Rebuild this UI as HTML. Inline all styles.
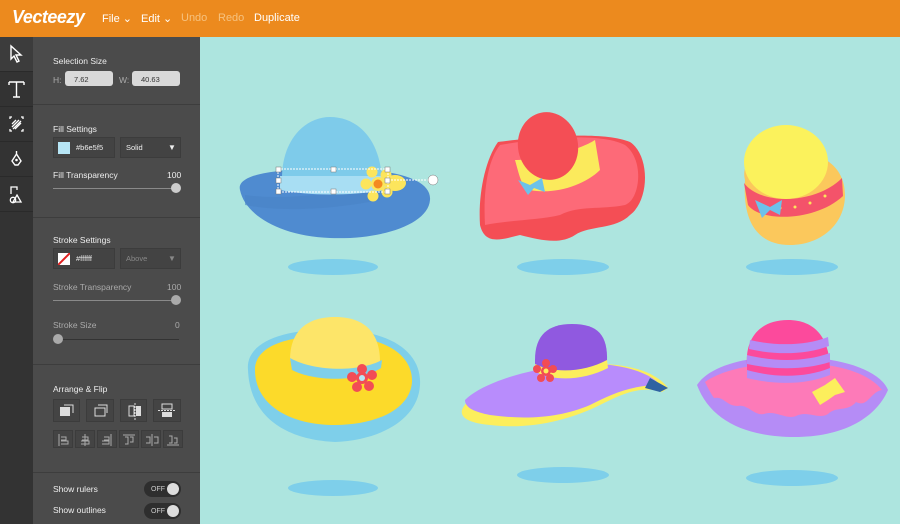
<!DOCTYPE html>
<html><head><style>
*{margin:0;padding:0;box-sizing:border-box}
body{width:900px;height:524px;overflow:hidden;font-family:"Liberation Sans",sans-serif;background:#ade5df;position:relative}
#top{position:absolute;left:0;top:0;width:900px;height:37px;background:#ec8a1e}
#top .logo{position:absolute;left:12px;top:7px;color:#fff;font:italic bold 18px "Liberation Sans",sans-serif;letter-spacing:-0.5px}
#top .m{position:absolute;top:12px;font-size:11px;color:#fff}
#tb{position:absolute;left:0;top:37px;width:33px;height:487px;background:#333}
#tb div{height:35px;border-bottom:1px solid #2a2a2a;position:relative}
#panel{position:absolute;left:33px;top:37px;width:167px;height:487px;background:#4b4b4b}
.t{position:absolute;font-size:8.5px;color:#eee}
.g{color:#aaa}
.sep{position:absolute;left:0;width:167px;height:1px;background:#3d3d3d}
.in{position:absolute;background:#d9d9d9;border-radius:3px;font-size:7.5px;color:#333;padding:4px 0 0 9px;height:15px}
.box{position:absolute;background:#434343;border:1px solid #3c3c3c}
.track{position:absolute;height:1px;background:#8a8a8a}
.knob{position:absolute;width:10px;height:10px;border-radius:50%;background:#ccc}
.btn{position:absolute;background:#444;border:1px solid #3c3c3c}
.tog{position:absolute;left:111px;width:37px;height:16px;border-radius:8px;background:#2e2e2e;font-size:7px;color:#ccc;padding:5px 0 0 7px;line-height:7px}
.tog i{position:absolute;right:2px;top:2px;width:12px;height:12px;border-radius:50%;background:#ddd}
</style></head><body>
<div id="top">
<div class="logo">Vecteezy</div>
<div class="m" style="left:102px">File ⌄</div>
<div class="m" style="left:141px">Edit ⌄</div>
<div class="m" style="left:181px;color:#f6c27f">Undo</div>
<div class="m" style="left:218px;color:#f6c27f">Redo</div>
<div class="m" style="left:254px">Duplicate</div>
</div>
<div id="tb">
<div style="background:#3c3c3c"><svg width="33" height="35"><path d="M11 9 L11 22 L14 19 L17 25 L19 24 L16 18 L21 18 Z" fill="none" stroke="#fff" stroke-width="1.4"/></svg></div>
<div><svg width="33" height="35"><path d="M9 10H24M9 10V13M24 10V13M16.5 10V25M13 25H20" stroke="#fff" stroke-width="1.4" fill="none"/></svg></div>
<div><svg width="33" height="35"><path d="M10 12V10H12M21 10H23V12M23 22V24H21M12 24H10V22M12 20L19 13M13 22L21 14M15 22L21 16M12 17L16 13" stroke="#fff" stroke-width="1.3" fill="none"/></svg></div>
<div><svg width="33" height="35"><path d="M16.5 9V13M12 19L16.5 12L21 19L18 23H15Z" stroke="#fff" stroke-width="1.4" fill="none"/><circle cx="16.5" cy="18" r="1.3" fill="#fff"/></svg></div>
<div><svg width="33" height="35"><path d="M11 17V10H17V13M17 18L21 25H13Z" stroke="#fff" stroke-width="1.3" fill="none"/><circle cx="13" cy="23" r="2.7" stroke="#fff" stroke-width="1.3" fill="none"/></svg></div>
</div>
<div id="panel">
<div class="t" style="left:20px;top:19px">Selection Size</div>
<div class="t g" style="left:20px;top:38px">H:</div><div class="in" style="left:32px;top:34px;width:48px">7.62</div>
<div class="t g" style="left:86px;top:38px">W:</div><div class="in" style="left:99px;top:34px;width:48px">40.63</div>
<div class="sep" style="top:67px"></div>
<div class="t" style="left:20px;top:87px">Fill Settings</div>
<div class="box" style="left:20px;top:100px;width:62px;height:21px"><div style="position:absolute;left:4px;top:4px;width:12px;height:12px;background:#b6e5f5"></div><span class="t" style="left:22px;top:5px;font-size:7.5px">#b6e5f5</span></div>
<div class="box" style="left:87px;top:100px;width:61px;height:21px"><span class="t" style="left:5px;top:5px;font-size:7.5px">Solid</span><span class="t" style="left:47px;top:5px;font-size:8px">▼</span></div>
<div class="t" style="left:20px;top:133px">Fill Transparency</div><div class="t" style="left:134px;top:133px">100</div>
<div class="track" style="left:20px;top:151px;width:122px"></div><div class="knob" style="left:138px;top:146px"></div>
<div class="sep" style="top:180px"></div>
<div class="t" style="left:20px;top:198px">Stroke Settings</div>
<div class="box" style="left:20px;top:211px;width:62px;height:21px"><svg style="position:absolute;left:4px;top:4px" width="12" height="12"><rect width="12" height="12" fill="#fff"/><path d="M0 12L12 0" stroke="#e02020" stroke-width="2"/></svg><span class="t" style="left:22px;top:5px;font-size:7.5px">#ffffff</span></div>
<div class="box" style="left:87px;top:211px;width:61px;height:21px"><span class="t g" style="left:5px;top:5px;font-size:7.5px;color:#888">Above</span><span class="t" style="left:47px;top:5px;font-size:8px;color:#888">▼</span></div>
<div class="t g" style="left:20px;top:245px">Stroke Transparency</div><div class="t g" style="left:134px;top:245px">100</div>
<div class="track" style="left:20px;top:263px;width:122px"></div><div class="knob" style="left:138px;top:258px;background:#aaa"></div>
<div class="t g" style="left:20px;top:283px">Stroke Size</div><div class="t g" style="left:142px;top:283px">0</div>
<div class="track" style="left:22px;top:302px;width:124px;background:#333"></div><div class="knob" style="left:20px;top:297px;background:#aaa"></div>
<div class="sep" style="top:327px"></div>
<div class="t" style="left:20px;top:347px">Arrange &amp; Flip</div>
<div class="btn" style="left:20px;top:362px;width:27px;height:23px"></div>
<div class="btn" style="left:53px;top:362px;width:28px;height:23px"></div>
<div class="btn" style="left:87px;top:362px;width:27px;height:23px"></div>
<div class="btn" style="left:120px;top:362px;width:28px;height:23px"></div>
<div class="btn" style="left:20px;top:393px;width:20px;height:18px"></div>
<div class="btn" style="left:42px;top:393px;width:20px;height:18px"></div>
<div class="btn" style="left:64px;top:393px;width:20px;height:18px"></div>
<div class="btn" style="left:86px;top:393px;width:20px;height:18px"></div>
<div class="btn" style="left:108px;top:393px;width:20px;height:18px"></div>
<div class="btn" style="left:130px;top:393px;width:20px;height:18px"></div>
<svg style="position:absolute;left:20px;top:362px" width="130" height="52"><rect x="7" y="8" width="10" height="9" fill="#ddd"/><path d="M11 6h9v8" stroke="#ddd" fill="none"/><rect x="42" y="9" width="10" height="8" stroke="#ddd" fill="none"/><path d="M45 6h9v8" stroke="#ddd" fill="none"/><rect x="76" y="7" width="5" height="10" stroke="#ddd" fill="none"/><rect x="83" y="7" width="5" height="10" fill="#ddd"/><path d="M82 4v17" stroke="#ddd" stroke-dasharray="2 1"/><rect x="109" y="5" width="10" height="5" stroke="#ddd" fill="none"/><rect x="109" y="13" width="10" height="5" fill="#ddd"/><path d="M105 11.5h18" stroke="#ddd" stroke-dasharray="2 1"/>
<g stroke="#aaa" fill="none"><path d="M6 35v12M8 38h5v3H8M8 42h7v3H8"/><path d="M32 35v12M29 38h6v3h-6M28 42h8v3h-8"/><path d="M58 35v12M51 38h5v3h-5M49 42h7v3h-7"/><path d="M70 36h12M72 38h3v7h-3M77 38h3v5h-3"/><path d="M99 35v12M93 38h4v6h-4M101 38h4v6h-4"/><path d="M114 46h12M116 37h3v7h-3M121 39h3v5h-3"/></g></svg>
<div class="sep" style="top:435px"></div>
<div class="t" style="left:20px;top:447px">Show rulers</div><div class="tog" style="top:444px">OFF<i></i></div>
<div class="t" style="left:20px;top:468px">Show outlines</div><div class="tog" style="top:466px">OFF<i></i></div>
</div>
<svg style="position:absolute;left:200px;top:37px" width="700" height="487" viewBox="200 37 700 487">
<g fill="#7ecfea">
<ellipse cx="333" cy="267" rx="45" ry="8"/><ellipse cx="563" cy="267" rx="46" ry="8"/><ellipse cx="792" cy="267" rx="46" ry="8"/>
<ellipse cx="333" cy="488" rx="45" ry="8"/><ellipse cx="563" cy="475" rx="46" ry="8"/><ellipse cx="792" cy="478" rx="46" ry="8"/>
</g>
<!-- hat1 -->
<path d="M240 190C235 170 300 168 340 170C390 168 432 178 430 200C428 225 380 240 330 238C280 236 245 215 240 190Z" fill="#4f8bd0"/>
<path d="M245 195C280 200 330 195 380 185L380 200C330 210 280 212 245 205Z" fill="#4a84c6" opacity=".6"/>
<path d="M282 178C282 140 305 117 330 117C358 117 382 140 382 185L282 185Z" fill="#7ecbea"/>
<path d="M280 176H386V190C350 196 310 196 280 190Z" fill="#a8def3"/>
<ellipse cx="395" cy="183" rx="11" ry="8" fill="#fce55c"/>
<g fill="#fce55c"><circle cx="372" cy="172" r="5.5"/><circle cx="386" cy="175" r="5.5"/><circle cx="387" cy="192" r="5.5"/><circle cx="373" cy="196" r="5.5"/><circle cx="366" cy="184" r="5.5"/><circle cx="378" cy="184" r="7"/></g>
<circle cx="378" cy="184" r="4.5" fill="#f48a20"/>
<g stroke="#fff" stroke-dasharray="2 1" fill="none"><path d="M278 169H388V192H278Z"/><path d="M388 180H428"/></g>
<g fill="#fff" stroke="#777" stroke-width=".5"><rect x="276" y="167" width="5" height="5"/><rect x="331" y="167" width="5" height="5"/><rect x="385" y="167" width="5" height="5"/><rect x="276" y="178" width="5" height="5"/><rect x="385" y="178" width="5" height="5"/><rect x="276" y="189" width="5" height="5"/><rect x="331" y="189" width="5" height="5"/><rect x="385" y="189" width="5" height="5"/><circle cx="433" cy="180" r="5"/></g>
<!-- hat2 -->
<path d="M498 142C530 138 600 130 630 142C650 155 650 200 630 215C615 230 590 225 575 235C560 245 540 240 520 235C500 240 485 245 480 225C478 195 485 160 498 142Z" fill="#f44e55"/>
<path d="M500 145C540 138 600 132 625 145C645 160 640 200 625 205C600 210 580 205 560 215C540 220 510 220 485 225C483 190 488 160 500 145Z" fill="#fd6a78"/>
<path d="M515 160C520 178 522 188 530 190C555 195 585 185 600 170L595 140C580 150 540 160 515 160Z" fill="#fbea5c"/>
<ellipse cx="548" cy="146" rx="30" ry="34" fill="#f44e55" transform="rotate(-12 548 146)"/>
<path d="M518 180L530 185L542 178L545 192L534 188L528 195Z" fill="#6cc2ea"/>
<!-- hat3 -->
<path d="M745 180C740 160 760 150 785 150C820 150 845 165 845 195C845 225 820 245 790 245C760 245 742 225 745 180Z" fill="#fbc85c"/>
<path d="M744 183C760 205 815 205 842 178L843 196C815 222 760 222 748 205Z" fill="#f4536a"/>
<g fill="#fce55c"><circle cx="780" cy="208" r="1.5"/><circle cx="795" cy="207" r="1.5"/><circle cx="810" cy="203" r="1.5"/><circle cx="825" cy="196" r="1.5"/></g>
<ellipse cx="786" cy="162" rx="42" ry="37" fill="#fbf25c"/>
<path d="M755 200L770 207L782 200L780 215L770 210L762 218Z" fill="#6cc2ea"/>
<!-- hat4 -->
<path d="M248 370C245 340 290 328 335 330C395 330 422 355 420 385C418 420 380 440 335 442C290 440 250 420 248 370Z" fill="#7ecfea"/>
<path d="M255 370C255 345 290 335 335 336C390 336 413 358 412 382C410 410 375 425 335 425C290 425 255 405 255 370Z" fill="#fcda2a"/>
<path d="M290 360C290 330 308 317 335 317C362 317 380 330 380 362C360 378 310 378 290 360Z" fill="#fde569"/>
<path d="M290 358C315 372 360 372 382 360L381 368C360 382 315 382 292 370Z" fill="#7ecfea"/>
<g fill="#f24c55"><circle cx="362" cy="369" r="5"/><circle cx="372" cy="375" r="5"/><circle cx="369" cy="386" r="5"/><circle cx="357" cy="387" r="5"/><circle cx="352" cy="377" r="5"/><circle cx="362" cy="378" r="6"/></g>
<circle cx="362" cy="378" r="3" fill="#b6e5f5"/>
<!-- hat5 -->
<path d="M462 410C470 390 520 370 570 365C620 360 655 370 668 388L662 392C640 385 620 395 600 405C570 420 530 430 490 425C470 423 460 418 462 410Z" fill="#fcee5c"/>
<path d="M465 400C480 385 520 370 570 365C615 360 650 372 660 385C630 385 610 395 590 405C560 418 525 420 490 415C475 412 465 408 465 400Z" fill="#b88cfc"/>
<path d="M650 378L668 388L660 392L645 388Z" fill="#2f62a2"/>
<path d="M535 360C535 335 548 324 572 324C598 324 608 335 607 362C585 375 555 375 535 365Z" fill="#9059e0"/>
<path d="M535 364C555 374 585 372 607 360L608 368C585 380 555 382 536 372Z" fill="#fcee5c"/>
<g fill="#f24c55"><circle cx="546" cy="363" r="4"/><circle cx="553" cy="369" r="4"/><circle cx="550" cy="378" r="4"/><circle cx="541" cy="378" r="4"/><circle cx="537" cy="369" r="4"/><circle cx="546" cy="371" r="5"/></g>
<circle cx="546" cy="371" r="2.5" fill="#fcee5c"/>
<!-- hat6 -->
<path d="M697 385C710 365 750 355 795 357C840 357 880 370 888 390C875 420 840 437 795 437C745 437 710 420 697 385Z" fill="#b58cf6"/>
<path d="M705 382C725 368 760 363 795 363C835 363 868 372 882 390C870 392 868 408 856 402C848 412 836 406 828 414C818 420 808 410 796 416C786 420 776 410 764 414C754 416 748 404 738 406C726 406 724 396 714 398C710 392 708 388 705 382Z" fill="#fd7ab8"/>
<path d="M747 365C745 338 760 320 788 320C815 320 830 338 830 370C805 380 770 380 747 372Z" fill="#fc4a9c"/>
<g fill="#b58cf6"><path d="M750 340C775 346 805 346 828 337L829 346C805 355 775 355 749 349Z"/><path d="M747 355C775 362 805 362 830 353L830 362C805 370 775 370 747 364Z"/><path d="M747 370C775 378 805 378 830 368L830 375C805 385 775 385 747 378Z"/></g>
<path d="M812 392L825 385L835 378L845 392L835 395L828 400L820 405Z" fill="#fcee5c"/>
</svg>
</body></html>
